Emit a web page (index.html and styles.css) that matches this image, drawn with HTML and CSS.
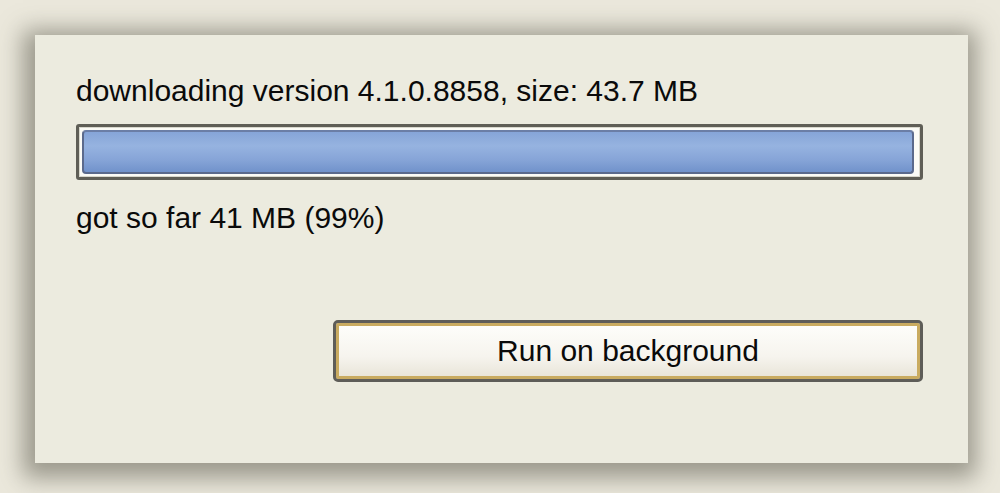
FILE: index.html
```html
<!DOCTYPE html>
<html lang="en">
<head>
<meta charset="UTF-8">
<meta name="viewport" content="width=device-width, initial-scale=1.0">
<title>Downloading update</title>
<link rel="stylesheet" href="styles.css">
</head>
<body>
<div class="dialog">
    <p class="status">downloading version 4.1.0.8858, size: 43.7 MB</p>
    <div class="progress">
        <div class="progress-fill" style="width: 99.7%"></div>
    </div>
    <p class="status got">got so far 41 MB (99%)</p>
    <div class="actions">
        <button class="btn">Run on background</button>
    </div>
</div>
</body>
</html>
```
FILE: styles.css
```css
* {
    box-sizing: border-box;
    margin: 0;
    padding: 0;
}

body {
    width: 1000px;
    height: 493px;
    overflow: hidden;
    background: #ebe8dc;
    font-family: 'Liberation Sans', Arial, sans-serif;
    padding: 35px 32px 30px 35px;
}

.dialog {
    width: 933px;
    height: 428px;
    background: #ecebdf;
    box-shadow: -2px 5px 22px 10px rgba(90, 88, 75, 0.55);
    padding: 41px 45px 0 41px;
}

.status {
    font-size: 30px;
    color: #0a0a0a;
    line-height: 30px;
}

.progress {
    margin-top: 18px;
    height: 56px;
    border: 3px solid #5f5e56;
    border-radius: 3px;
    background: #fbfbf6;
    padding: 3px 3px;
    box-shadow: inset 0 0 0 1px #d8d7cc;
}

.progress-fill {
    height: 100%;
    border-radius: 4px;
    border: 2px solid #5b6a8c;
    border-top-color: #6b7ea6;
    background: linear-gradient(#86a5d8, #96b3e0 35%, #86a4d7 70%, #7192cb);
}

.got {
    margin-top: 23px;
}

.actions {
    display: flex;
    justify-content: flex-end;
    margin-top: 87px;
}

.btn {
    width: 590px;
    height: 62px;
    font-family: inherit;
    font-size: 30px;
    color: #0a0a0a;
    border: 3px solid #5e5d58;
    border-radius: 5px;
    background: linear-gradient(#fefefb, #f6f4ee 60%, #e7e3d6);
    box-shadow: inset 0 0 0 3px #c9ab60;
    cursor: pointer;
}
```
